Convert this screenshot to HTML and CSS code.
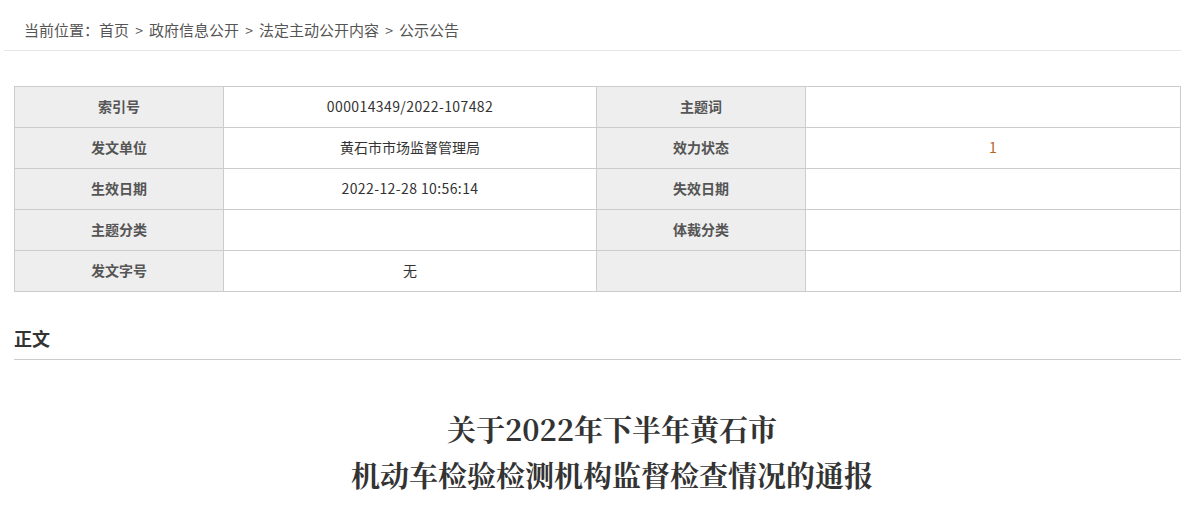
FILE: index.html
```html
<!DOCTYPE html>
<html lang="zh-CN">
<head>
    <meta charset="UTF-8">
    <meta name="viewport" content="width=device-width, initial-scale=1.0">
    <title>公示公告</title>
    <link rel="stylesheet" href="styles.css">
</head>
<body>
    <div class="crumb">
        当前位置：<a href="#">首页</a><span class="sep">&gt;</span><a href="#">政府信息公开</a><span class="sep">&gt;</span><a href="#">法定主动公开内容</a><span class="sep">&gt;</span><a href="#">公示公告</a>
    </div>
    <div class="main">
        <table class="info">
            <colgroup>
                <col style="width: 209px">
                <col style="width: 373px">
                <col style="width: 209px">
                <col>
            </colgroup>
            <tr>
                <th>索引号</th>
                <td class="num">000014349/2022-107482</td>
                <th>主题词</th>
                <td></td>
            </tr>
            <tr>
                <th>发文单位</th>
                <td>黄石市市场监督管理局</td>
                <th>效力状态</th>
                <td class="status">1</td>
            </tr>
            <tr>
                <th>生效日期</th>
                <td class="num">2022-12-28 10:56:14</td>
                <th>失效日期</th>
                <td></td>
            </tr>
            <tr>
                <th>主题分类</th>
                <td></td>
                <th>体裁分类</th>
                <td></td>
            </tr>
            <tr>
                <th>发文字号</th>
                <td>无</td>
                <th></th>
                <td></td>
            </tr>
        </table>

        <h3 class="section-title">正文</h3>

        <h1 class="doc-title">关于2022年下半年黄石市<br>机动车检验检测机构监督检查情况的通报</h1>
    </div>
</body>
</html>
```

FILE: styles.css
```css
body {
    margin: 0;
    padding: 0;
    background-color: #fff;
    color: #333;
    font-family: "Noto Sans CJK SC", "Liberation Sans", sans-serif;
    font-size: 14px;
}
a {
    color: #555;
    text-decoration: none;
}
.crumb {
    margin: 0 9px 0 4px;
    padding: 20px 20px 10px;
    line-height: 20px;
    font-size: 15px;
    color: #555;
    border-bottom: 1px solid #e6e6e6;
}
.crumb .sep {
    display: inline-block;
    width: 20px;
    text-align: center;
    font-size: 14px;
}
.main {
    width: 1167px;
    margin: 35px 0 0 14px;
}
.info {
    width: 100%;
    border-collapse: collapse;
    table-layout: fixed;
}
.info th,
.info td {
    height: 41px;
    padding: 0 0 3px;
    border: 1px solid #ccc;
    text-align: center;
    vertical-align: middle;
    box-sizing: border-box;
}
.info th {
    background-color: #eee;
    color: #555;
    font-size: 14px;
    font-weight: bold;
}
.info td {
    color: #333;
    font-size: 14px;
}
.info td.num {
    letter-spacing: 0.4px;
}
.info td.status {
    color: #b5651d;
}
.section-title {
    margin: 34px 0 0;
    padding-bottom: 9px;
    font-size: 18px;
    line-height: 24px;
    font-weight: bold;
    color: #333;
    border-bottom: 1px solid #ccc;
}
.doc-title {
    margin: 46px 0 0;
    padding-left: 29px;
    text-align: center;
    font-family: "Noto Serif CJK SC", "Liberation Serif", "Noto Sans CJK SC", serif;
    font-size: 29px;
    line-height: 46px;
    font-weight: bold;
    color: #333;
}
```
